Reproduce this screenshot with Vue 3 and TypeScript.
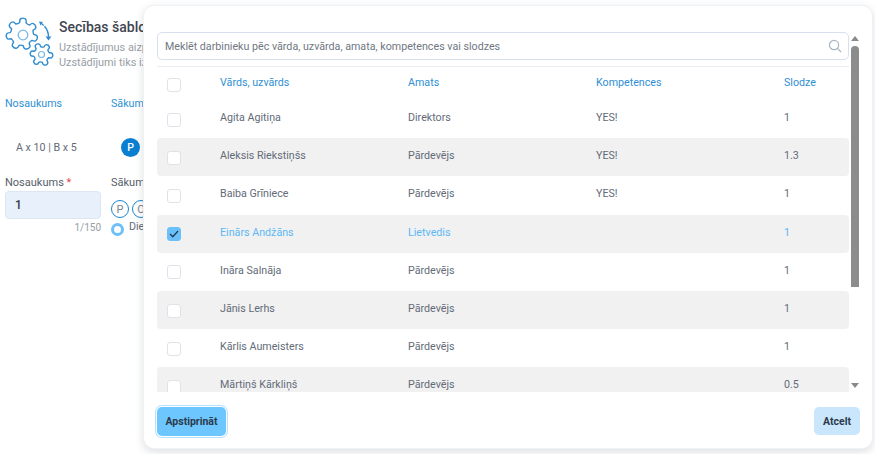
<script setup lang="ts">
interface Row { name: string; role: string; comp: string; load: string; checked?: boolean }
const rows: Row[] = [
  { name: 'Agita Agitiņa', role: 'Direktors', comp: 'YES!', load: '1' },
  { name: 'Aleksis Riekstiņšs', role: 'Pārdevējs', comp: 'YES!', load: '1.3' },
  { name: 'Baiba Grīniece', role: 'Pārdevējs', comp: 'YES!', load: '1' },
  { name: 'Einārs Andžāns', role: 'Lietvedis', comp: '', load: '1', checked: true },
  { name: 'Ināra Salnāja', role: 'Pārdevējs', comp: '', load: '1' },
  { name: 'Jānis Lerhs', role: 'Pārdevējs', comp: '', load: '1' },
  { name: 'Kārlis Aumeisters', role: 'Pārdevējs', comp: '', load: '1' },
  { name: 'Mārtiņš Kārkliņš', role: 'Pārdevējs', comp: '', load: '0.5' },
]
function gear(cx: number, cy: number, ro: number, ri: number, teeth: number, rot: number): string {
  const pts: string[] = []
  const step = (Math.PI * 2) / teeth
  for (let i = 0; i < teeth; i++) {
    const a = i * step + rot
    const p = (r: number, t: number) => `${(cx + r * Math.cos(a + t * step)).toFixed(2)} ${(cy + r * Math.sin(a + t * step)).toFixed(2)}`
    pts.push(`${i === 0 ? 'M' : 'L'}${p(ri, -0.3)}`)
    pts.push(`Q${p(ro, -0.26)} ${p(ro, -0.13)}`)
    pts.push(`Q${p(ro + 1, 0)} ${p(ro, 0.13)}`)
    pts.push(`Q${p(ro, 0.26)} ${p(ri, 0.3)}`)
    pts.push(`Q${p(ri - 1, 0.5)} ${p(ri, 0.7)}`)
  }
  return pts.join(' ') + ' Z'
}
const bigGear = gear(22, 34, 15.5, 11.8, 7, 0.3)
const smallGear = gear(41.5, 54.5, 11, 8, 6, 0.1)
</script>

<template>
  <div class="page">
    <header class="head">
      <svg class="logo" width="54" height="62" viewBox="5 8 54 62" fill="none">
        <path :d="bigGear" stroke="#2f8ccf" stroke-width="1.4" stroke-linejoin="round" />
        <circle cx="23" cy="35" r="4.8" stroke="#7ab8e3" stroke-width="1.3" />
        <path :d="smallGear" stroke="#2f8ccf" stroke-width="1.4" stroke-linejoin="round" />
        <circle cx="41.5" cy="54.5" r="3" stroke="#7ab8e3" stroke-width="1.2" />
        <path d="M40.5 23 C45.5 26 48.5 31 48.5 37" stroke="#2f8ccf" stroke-width="1.4" stroke-dasharray="4 1.2 14" />
        <path d="M45.6 36.5 L51.4 36.5 L48.5 40.5 Z" fill="#2f8ccf" />
        <path d="M39 21.5 L43 22 L40.5 25.5 Z" fill="#2f8ccf" />
      </svg>
      <div class="head-text">
        <h1>Secības šablo</h1>
        <p>Uzstādījumus aizp</p>
        <p>Uzstādījumi tiks iz</p>
      </div>
    </header>

    <div class="cols titles">
      <span>Nosaukums</span>
      <span>Sākum</span>
    </div>

    <div class="cols sample">
      <span class="sample-name">A x 10 | B x 5</span>
      <span class="dot">P</span>
    </div>

    <div class="cols form">
      <div>
        <label>Nosaukums <em>*</em></label>
        <div class="input">1</div>
        <div class="count">1/150</div>
      </div>
      <div>
        <label>Sākum</label>
        <div class="days"><span class="ring">P</span><span class="ring">O</span></div>
        <div class="radio-line"><i class="radio"></i>Die</div>
      </div>
    </div>

    <section class="modal">
      <div class="modal-body">
        <div class="main">
          <div class="search">
            <span>Meklēt darbinieku pēc vārda, uzvārda, amata, kompetences vai slodzes</span>
            <svg width="14" height="14" viewBox="0 0 14 14" fill="none" stroke="#a9b4c2" stroke-width="1.2">
              <circle cx="6" cy="6" r="4.6" />
              <path d="M9.4 9.4 L13 13" />
            </svg>
          </div>
          <div class="table">
            <div class="row thead">
              <i class="box"></i>
              <span>Vārds, uzvārds</span><span>Amats</span><span>Kompetences</span><span>Slodze</span>
            </div>
            <div v-for="r in rows" :key="r.name" class="row" :class="{ picked: r.checked }">
              <i class="box" :class="{ on: r.checked }">
                <svg v-if="r.checked" width="10" height="8" viewBox="0 0 10 8" fill="none" stroke="#1f3a56" stroke-width="1.3">
                  <path d="M1 4 L3.8 6.8 L9 1" />
                </svg>
              </i>
              <span>{{ r.name }}</span><span>{{ r.role }}</span><span>{{ r.comp }}</span><span>{{ r.load }}</span>
            </div>
          </div>
        </div>
        <div class="scrollbar">
          <i class="arrow up"></i>
          <i class="thumb"></i>
          <i class="arrow down"></i>
        </div>
      </div>
      <footer class="foot">
        <button class="btn primary">Apstiprināt</button>
        <button class="btn cancel">Atcelt</button>
      </footer>
    </section>
  </div>
</template>

<style>
html, body { margin: 0; background: #fff; }
</style>

<style scoped>
.page {
  position: relative;
  width: 875px;
  height: 454px;
  overflow: hidden;
  background: #fff;
  font-family: Roboto, "Liberation Sans", sans-serif;
  font-size: 10.7px;
  color: #636b78;
  padding: 0 0 0 5px;
  box-sizing: border-box;
}
.head { display: flex; padding-top: 8px; height: 62px; }
.logo { flex: none; }
.head-text { padding-top: 11px; white-space: nowrap; }
h1 { margin: 0 0 4px; font-size: 14px; line-height: 17px; font-weight: 500; color: #3f4651; }
.head-text p { margin: 0; font-size: 10.9px; line-height: 15px; color: #989ea6; }
.cols { display: grid; grid-template-columns: 106px 1fr; }
.titles { margin-top: 27px; color: #2f8fd3; line-height: 14px; }
.sample { margin-top: 26px; align-items: center; height: 20px; }
.sample-name { padding-left: 11px; }
.dot {
  width: 19px; height: 19px; border-radius: 50%; background: #0a7fd1; color: #fff;
  display: flex; align-items: center; justify-content: center; font-weight: 500; font-size: 10.5px;
  margin-left: 10px;
}
.form { margin-top: 19px; }
label { display: block; line-height: 14px; color: #565e6a; font-size: 11px; }
label em { color: #e5484d; font-style: normal; }
.input {
  box-sizing: border-box; width: 96px; height: 28px; margin-top: 1px; padding: 0 9px;
  background: #e8f0fc; border: 1px solid #dde6f3; border-radius: 4px;
  display: flex; align-items: center; color: #333a45; font-size: 12px; font-weight: 500;
}
.count { width: 96px; text-align: right; color: #989ea6; font-size: 10px; line-height: 13px; margin-top: 2px; }
.days { display: flex; gap: 3px; margin-top: 10px; }
.ring {
  box-sizing: border-box; width: 18px; height: 18px; border-radius: 50%; border: 1.7px solid #1c86d0;
  display: flex; align-items: center; justify-content: center; color: #7b838e; font-size: 11px;
}
.radio-line { display: flex; align-items: flex-start; gap: 5px; margin-top: 3px; line-height: 12px; }
.radio { box-sizing: border-box; width: 13px; height: 13px; border-radius: 50%; border: 3px solid #6cc0f7; background: #fff; margin-top: 2px; }

.modal {
  position: absolute; left: 143px; top: 5px; width: 730px; height: 444px;
  box-sizing: border-box; background: #fff; border: 1px solid #eef1f5; border-radius: 11px;
  box-shadow: 0 3px 8px rgba(50, 60, 80, 0.16);
  display: flex; flex-direction: column;
}
.modal-body { display: flex; height: 360px; margin-top: 26px; padding-left: 13px; overflow: hidden; flex: none; }
.main { width: 692px; flex: none; display: flex; flex-direction: column; overflow: hidden; }
.search {
  box-sizing: border-box; flex: none; height: 28px; border: 1px solid #d6e0ee; border-radius: 5px;
  display: flex; align-items: center; justify-content: space-between; padding: 0 6px 0 7px;
  color: #6f7782; font-size: 10.7px; background: #fff;
}
.table { margin-top: 6px; border-top: 1px solid #e9edf3; overflow: hidden; }
.row {
  display: grid; grid-template-columns: 63px 188px 188px 188px 1fr; align-items: center;
  height: 38.2px; box-sizing: border-box; padding-bottom: 3px; border-radius: 4px; color: #636b78; font-size: 10.7px;
}
.row > .box { margin-left: 10px; position: relative; top: 2px; }
.row:nth-child(odd):not(.thead) { background: #f1f1f1; }
.thead { height: 33px; color: #2f8fd3; padding-bottom: 2px; }
.picked { color: #5bb8f6; }
.box {
  box-sizing: border-box; width: 14px; height: 14px; border-radius: 3px; border: 1px solid #dfe3e9; background: #fff;
  display: flex; align-items: center; justify-content: center;
}
.box.on { background: #6cc0f9; border-color: #6cc0f9; }
.scrollbar {
  flex: none; width: 8px; margin-left: 2px; display: flex; flex-direction: column; align-items: center;
  height: 360px; box-sizing: border-box; padding-top: 4px;
}
.arrow { width: 0; height: 0; border-left: 4px solid transparent; border-right: 4px solid transparent; flex: none; }
.up { border-bottom: 5px solid #8a8a8a; }
.down { border-top: 5px solid #8a8a8a; margin-top: auto; margin-bottom: 4px; }
.thumb { width: 8px; height: 241px; margin-top: 5px; background: #8c8c8c; border-radius: 4px 4px 0 0; flex: none; }
.foot { display: flex; justify-content: space-between; align-items: flex-start; padding: 15px 12px 0 13px; }
.btn {
  border: 0; height: 28px; border-radius: 5px; font: 700 10.5px Roboto, sans-serif; color: #2b3a4c;
  cursor: pointer; padding: 0;
}
.primary { width: 69px; height: 29px; background: #6ec6ff; box-shadow: 0 0 0 1px #fff, 0 0 0 2px #b5e2ff; }
.cancel { width: 46px; background: #cae6fd; }
</style>
